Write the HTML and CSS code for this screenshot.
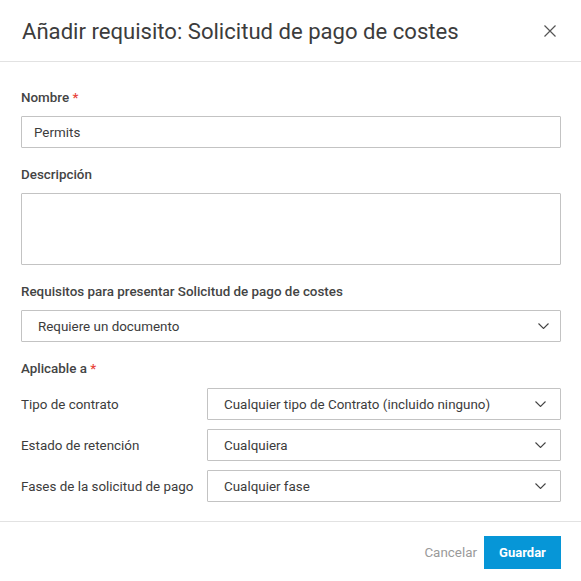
FILE: index.html
```html
<!DOCTYPE html>
<html lang="es">
<head>
<meta charset="utf-8">
<link rel="stylesheet" href="styles.css">
</head>
<body>
<div class="dialog">
  <header class="dialog-header">
    <h1 class="dialog-title">Añadir requisito: Solicitud de pago de costes</h1>
    <button class="close-btn" aria-label="Cerrar">
      <svg width="14" height="14" viewBox="0 0 14 14"><path d="M1.5 1.5L12.5 12.5M12.5 1.5L1.5 12.5" stroke="#555" stroke-width="1.2" fill="none"/></svg>
    </button>
  </header>

  <main class="dialog-body">
    <div class="field">
      <label class="field-label">Nombre <span class="req">*</span></label>
      <div class="input">Permits</div>
    </div>

    <div class="field">
      <label class="field-label">Descripción</label>
      <div class="textarea"></div>
    </div>

    <div class="field">
      <label class="field-label">Requisitos para presentar Solicitud de pago de costes</label>
      <div class="select select-wide">
        <span>Requiere un documento</span>
        <svg class="chev" width="11" height="6" viewBox="0 0 11 6"><path d="M0.5 0.5L5.5 5.5L10.5 0.5" stroke="#444" stroke-width="1.1" fill="none"/></svg>
      </div>
    </div>

    <div class="field field-last">
      <label class="field-label label-apply">Aplicable a <span class="req">*</span></label>
      <div class="apply-grid">
        <span class="row-label">Tipo de contrato</span>
        <div class="select select-row">
          <span>Cualquier tipo de Contrato (incluido ninguno)</span>
          <svg class="chev" width="11" height="6" viewBox="0 0 11 6"><path d="M0.5 0.5L5.5 5.5L10.5 0.5" stroke="#444" stroke-width="1.1" fill="none"/></svg>
        </div>
        <span class="row-label">Estado de retención</span>
        <div class="select select-row">
          <span>Cualquiera</span>
          <svg class="chev" width="11" height="6" viewBox="0 0 11 6"><path d="M0.5 0.5L5.5 5.5L10.5 0.5" stroke="#444" stroke-width="1.1" fill="none"/></svg>
        </div>
        <span class="row-label">Fases de la solicitud de pago</span>
        <div class="select select-row">
          <span>Cualquier fase</span>
          <svg class="chev" width="11" height="6" viewBox="0 0 11 6"><path d="M0.5 0.5L5.5 5.5L10.5 0.5" stroke="#444" stroke-width="1.1" fill="none"/></svg>
        </div>
      </div>
    </div>
  </main>

  <footer class="dialog-footer">
    <button class="btn-cancel">Cancelar</button>
    <button class="btn-save">Guardar</button>
  </footer>
</div>
</body>
</html>
```
FILE: styles.css
```css
* { box-sizing: border-box; }
html, body { margin: 0; padding: 0; background: #fff; }
body {
  font-family: Roboto, "Liberation Sans", sans-serif;
  color: #3c3c3c;
  font-size: 13.4px;
}
.dialog { width: 581px; }

.dialog-header {
  height: 62px;
  border-bottom: 1px solid #e2e2e2;
  display: flex;
  align-items: center;
  justify-content: space-between;
  padding: 0 24px 0 22px;
}
.dialog-title {
  margin: 0;
  font-size: 22.1px;
  font-weight: 400;
  line-height: 28px;
  color: #3c3c3c;
}
.close-btn {
  border: 0;
  background: none;
  padding: 0;
  width: 14px;
  height: 14px;
  display: flex;
  cursor: pointer;
}

.dialog-body {
  padding: 28px 20px 19px 21px;
  display: flex;
  flex-direction: column;
  gap: 19px;
}
.field { display: flex; flex-direction: column; }
.field-label {
  font-weight: 500;
  line-height: 16px;
  margin-bottom: 10px;
  color: #444;
}
.label-apply { margin-bottom: 11px; }
.req { color: #e8453c; }

.input, .textarea, .select {
  border: 1px solid #c3c3c3;
  background: #fff;
  border-radius: 1px;
}
.input {
  height: 32px;
  display: flex;
  align-items: center;
  padding: 0 12px;
}
.textarea { height: 72px; }
.select {
  height: 32px;
  display: flex;
  align-items: center;
  justify-content: space-between;
  padding: 0 11px 0 16px;
}
.select-row { padding-right: 14px; }
.chev { display: block; }

.apply-grid {
  display: grid;
  grid-template-columns: 186px 1fr;
  row-gap: 9px;
  align-items: center;
}
.row-label { font-weight: 400; }

.dialog-footer {
  border-top: 1px solid #e2e2e2;
  display: flex;
  justify-content: flex-end;
  align-items: center;
  padding: 14px 20px 0 0;
  gap: 7px;
}
.btn-cancel {
  border: 0;
  background: none;
  padding: 0;
  font: inherit;
  color: #9a9a9a;
  cursor: pointer;
}
.btn-save {
  border: 0;
  background: #0696d7;
  color: #fff;
  font: inherit;
  font-weight: 700;
  font-size: 13px;
  width: 77px;
  height: 33px;
  padding: 0;
  cursor: pointer;
}
```
